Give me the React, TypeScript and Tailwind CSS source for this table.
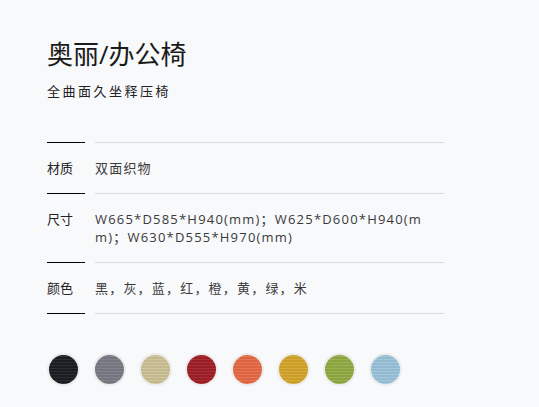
const specs = [
  { label: '材质', value: '双面织物' },
  { label: '尺寸', value: 'W665*D585*H940(mm)；W625*D600*H940(mm)；W630*D555*H970(mm)' },
  { label: '颜色', value: '黑，灰，蓝，红，橙，黄，绿，米' },
];

const swatches = ['#1b1e23', '#7b7b86', '#cdc295', '#a11f26', '#e76a45', '#d5a62b', '#93ac45', '#9bc4db'];

export default function App() {
  return (
    <div
      className="min-h-screen bg-[#f8f9fb] pl-[47px] pt-[36px] text-[#222]"
      style={{ fontFamily: '"Open Sans", "Noto Sans CJK SC", sans-serif' }}
    >
      <h1 className="text-[26px] leading-[36px] font-normal text-[#1a1a1a]">奥丽/办公椅</h1>
      <p className="mt-[10px] text-[13px] leading-[18px] tracking-[2.5px] text-[#222]">全曲面久坐释压椅</p>

      <div className="mt-[42px] w-[397px]">
        {specs.map((row, i) => (
          <div key={row.label} className="flex">
            <div
              className={`w-[38px] shrink-0 border-t border-black py-4 text-[13px] leading-[18px] text-[#222] ${
                i === specs.length - 1 ? 'border-b' : ''
              }`}
            >
              {row.label}
            </div>
            <div
              className={`ml-[10px] flex-1 border-t border-[#dcdcdc] py-4 text-[13px] leading-[18px] tracking-[1.2px] text-[#3a3a3a] break-all ${
                i === specs.length - 1 ? 'border-b' : ''
              }`}
            >
              {row.value}
            </div>
          </div>
        ))}
      </div>

      <div className="mt-[39px] flex gap-[13px]">
        {swatches.map((c) => (
          <div key={c} className="h-[33px] w-[33px] rounded-full bg-[#ececec] p-[2px]">
            <div className="h-full w-full rounded-full" style={{ backgroundColor: c }}>
              <div className="h-full w-full rounded-full bg-[repeating-linear-gradient(0deg,rgba(255,255,255,0.07)_0px,rgba(255,255,255,0.07)_1px,rgba(0,0,0,0.05)_1px,rgba(0,0,0,0.05)_3px)]" />
            </div>
          </div>
        ))}
      </div>
    </div>
  );
}
